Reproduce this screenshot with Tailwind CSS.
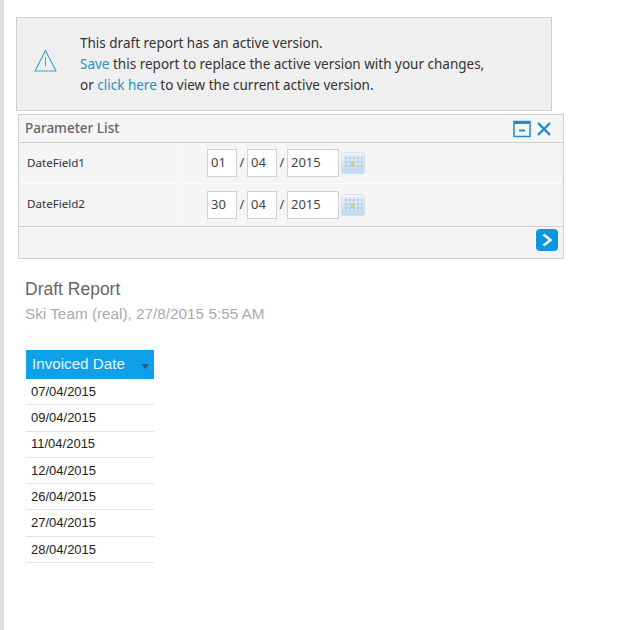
<!DOCTYPE html>
<html lang="en">
<head>
<meta charset="UTF-8" />
<title>Draft Report</title>
<script src="https://cdn.jsdelivr.net/npm/@tailwindcss/browser@4"></script>
</head>
<body class="bg-white">
<svg class="absolute h-0 w-0">
    <defs>
        <linearGradient id="calFill" x1="0" y1="0" x2="0" y2="1">
            <stop offset="0" stop-color="#f4f7fa" />
            <stop offset="1" stop-color="#b9dcf2" />
        </linearGradient>
    </defs>
</svg>
<div class="flex h-[630px] w-[631px] overflow-hidden">
    <div class="w-[4px] shrink-0 bg-[#e0e0e0]"></div>
    <div class="w-[627px] pt-[17px]">
        <!-- draft notice -->
        <div class="ml-[12px] flex h-[94px] w-[536px] items-center border border-[#cfcfcf] bg-[#efefef] font-['Noto_Sans',sans-serif] text-[13.5px] leading-[21px] text-[#333]">
            <svg class="mb-[8px] ml-[17px] h-[23px] w-[23px]" viewBox="0 0 23 23" fill="none" stroke="#3ea6cf" stroke-width="1.2">
                <path d="M11.5 1.5 L22 22 H1 Z" stroke-linejoin="round" />
                <path d="M11.5 8 V17" stroke-width="1" />
            </svg>
            <div class="ml-[23px]">
                <p>This draft report has an active version.</p>
                <p><span class="text-[#2b8fc0]">Save</span> this report to replace the active version with your changes,</p>
                <p>or <span class="text-[#2b8fc0]">click here</span> to view the current active version.</p>
            </div>
        </div>

        <!-- parameter list -->
        <div class="ml-[14px] mt-[3px] w-[546px] border border-[#cfcfcf] bg-[#f5f5f5] font-['Noto_Sans',sans-serif]">
            <div class="flex h-[28px] items-center justify-between border-b border-[#cfcfcf] pl-[6px] pr-[11px]">
                <span class="text-[13.5px] font-medium text-[#666]">Parameter List</span>
                <div class="flex items-center gap-[5px]">
                    <svg class="h-[18px] w-[18px]" viewBox="0 0 18 18" fill="none">
                        <rect x="1" y="1.5" width="16" height="15" stroke="#1a8fc9" stroke-width="1.5" />
                        <rect x="1" y="1" width="16" height="3" fill="#1a8fc9" />
                        <rect x="6" y="9.5" width="6" height="2" fill="#1a8fc9" />
                    </svg>
                    <svg class="h-[16px] w-[16px]" viewBox="0 0 16 16" fill="none" stroke="#1a8fc9" stroke-width="2.4">
                        <path d="M2 2 L14 14 M14 2 L2 14" />
                    </svg>
                </div>
            </div>
            <div class="flex h-[41px] items-center border-b border-[#fbfbfb]">
                <div class="flex h-full w-[160px] items-center border-r border-[#fbfbfb] pl-[8px] text-[11.6px] text-[#333]">DateField1</div>
                <div class="ml-[28px] flex items-center text-[13px] text-[#444]">
                    <span class="flex h-[28px] w-[30px] items-center border border-[#d0d0d0] bg-white pl-[3px]">01</span>
                    <span class="w-[10px] text-center">/</span>
                    <span class="flex h-[28px] w-[30px] items-center border border-[#d0d0d0] bg-white pl-[3px]">04</span>
                    <span class="w-[10px] text-center">/</span>
                    <span class="flex h-[28px] w-[52px] items-center border border-[#d0d0d0] bg-white pl-[3px]">2015</span>
                    <svg class="ml-[2px] h-[22px] w-[24px]" viewBox="0 0 24 22" fill="none">
                        <rect x="0.5" y="0.5" width="23" height="21" rx="2" fill="url(#calFill)" stroke="#d6dfe7" />
                        <path d="M5 3 V18 M9 3 V18 M13 3 V18 M17 3 V18 M21 3 V18 M3 6 H22 M3 10 H22 M3 14 H22" stroke="#b9cbe0" stroke-width="1" />
                        <rect x="10" y="10" width="3" height="4" fill="#e8c860" />
                    </svg>
                </div>
            </div>
            <div class="flex h-[42px] items-center">
                <div class="flex h-full w-[160px] items-center border-r border-[#fbfbfb] pb-[2px] pl-[8px] text-[11.6px] text-[#333]">DateField2</div>
                <div class="ml-[28px] flex items-center text-[13px] text-[#444]">
                    <span class="flex h-[28px] w-[30px] items-center border border-[#d0d0d0] bg-white pl-[3px]">30</span>
                    <span class="w-[10px] text-center">/</span>
                    <span class="flex h-[28px] w-[30px] items-center border border-[#d0d0d0] bg-white pl-[3px]">04</span>
                    <span class="w-[10px] text-center">/</span>
                    <span class="flex h-[28px] w-[52px] items-center border border-[#d0d0d0] bg-white pl-[3px]">2015</span>
                    <svg class="ml-[2px] h-[22px] w-[24px]" viewBox="0 0 24 22" fill="none">
                        <rect x="0.5" y="0.5" width="23" height="21" rx="2" fill="url(#calFill)" stroke="#d6dfe7" />
                        <path d="M5 3 V18 M9 3 V18 M13 3 V18 M17 3 V18 M21 3 V18 M3 6 H22 M3 10 H22 M3 14 H22" stroke="#b9cbe0" stroke-width="1" />
                        <rect x="10" y="10" width="3" height="4" fill="#e8c860" />
                    </svg>
                </div>
            </div>
            <div class="flex h-[32px] items-center justify-end border-t border-[#cfcfcf] pb-[6px] pr-[5px]">
                <div class="flex h-[22px] w-[22px] items-center justify-center rounded-[4px] bg-[#0f96e0]">
                    <svg class="h-[14px] w-[12px]" viewBox="0 0 12 14" fill="none" stroke="#fff" stroke-width="2.4">
                        <path d="M2.5 1.5 L9.5 7 L2.5 12.5" />
                    </svg>
                </div>
            </div>
        </div>

        <!-- report -->
        <div class="ml-[21px] mt-[19px] font-['Liberation_Sans',sans-serif]">
            <h1 class="text-[17.5px] leading-[22px] text-[#666]">Draft Report</h1>
            <p class="mt-[5px] text-[15.3px] leading-[18px] text-[#aaa]">Ski Team (real), 27/8/2015 5:55 AM</p>
            <div class="ml-[1px] mt-[27px] w-[128px]">
                <div class="flex h-[29px] items-center justify-between bg-[#0ea1ea] pl-[6px] pr-[5px] text-[15.2px] text-[#e6f6ff]">
                    <span>Invoiced Date</span>
                    <span class="mt-[3px] h-0 w-0 border-x-[4px] border-t-[5px] border-x-transparent border-t-[#245a80]"></span>
                </div>
                <ul class="text-[13px] text-[#222]">
                    <li class="flex h-[26.3px] items-center border-b border-[#e2e2e2] pl-[5px]">07/04/2015</li>
                    <li class="flex h-[26.3px] items-center border-b border-[#e2e2e2] pl-[5px]">09/04/2015</li>
                    <li class="flex h-[26.3px] items-center border-b border-[#e2e2e2] pl-[5px]">11/04/2015</li>
                    <li class="flex h-[26.3px] items-center border-b border-[#e2e2e2] pl-[5px]">12/04/2015</li>
                    <li class="flex h-[26.3px] items-center border-b border-[#e2e2e2] pl-[5px]">26/04/2015</li>
                    <li class="flex h-[26.3px] items-center border-b border-[#e2e2e2] pl-[5px]">27/04/2015</li>
                    <li class="flex h-[26.3px] items-center border-b border-[#e2e2e2] pl-[5px]">28/04/2015</li>
                </ul>
            </div>
        </div>
    </div>
</div>
</body>
</html>
